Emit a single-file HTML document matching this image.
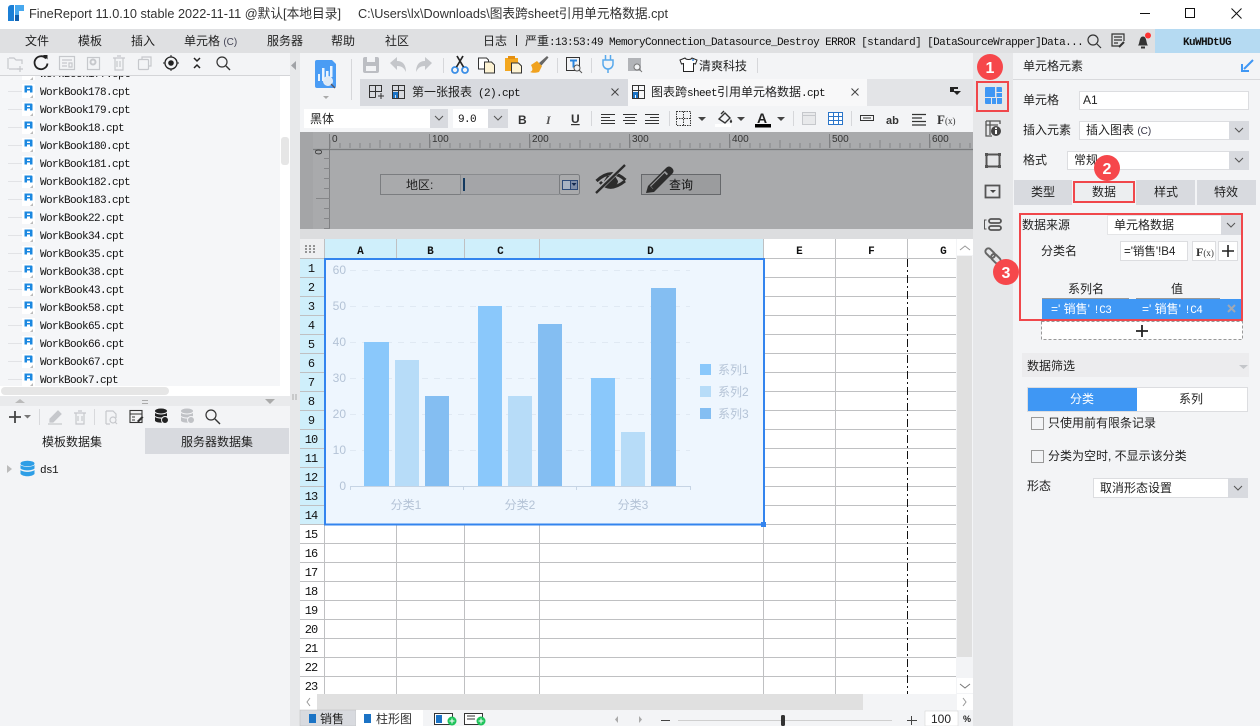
<!DOCTYPE html>
<html><head><meta charset="utf-8">
<style>
html,body{margin:0;padding:0;background:#f3f4f6;overflow:hidden}
svg{display:block}
text{white-space:pre}
.c{font:12px "Liberation Sans","Noto Sans CJK SC",sans-serif;fill:#222}
.t{font:13px "Liberation Sans","Noto Sans CJK SC",sans-serif;fill:#333}
.m{font:11px "Liberation Mono","Noto Sans CJK SC",monospace;letter-spacing:-.6px;fill:#111}
.s{font:12px "Liberation Mono",monospace;letter-spacing:-.9px;fill:#111}
.a{font:12px "Liberation Sans","Noto Sans CJK SC",sans-serif;fill:#b4c3d6}
.n{font:bold 16px "Liberation Sans",sans-serif;fill:#fff}
.mid{text-anchor:middle}
</style></head><body>
<svg xmlns="http://www.w3.org/2000/svg" width="1260" height="726" viewBox="0 0 1260 726">
<defs>
<pattern id="t10" width="10" height="5" patternUnits="userSpaceOnUse" x="329.5" y="143"><path d="M.5 0V5" stroke="#858688" fill="none"/></pattern>
<pattern id="t50" width="50" height="8" patternUnits="userSpaceOnUse" x="329.5" y="140"><path d="M.5 0V8" stroke="#858688" fill="none"/></pattern>
<pattern id="v10" width="6" height="10" patternUnits="userSpaceOnUse" x="324" y="149"><path d="M0 9.5H6" stroke="#858688" fill="none"/></pattern>
<g id="fi"><rect x="22" y="-7" width="13" height="14" fill="#fff"/><path d="M24.500-5.500h7a1 1 0 0 1 1 1v6h-2.500v-2h-3v2h-2.500z" fill="#1b88e0"/><rect x="27" y="-3.500" width="3" height="1.500" fill="#fff"/><path d="M30 7l3-3v3z" fill="#bbb"/><path d="M8 .5H22" stroke="#e2e3e6"/></g>
<g id="dd"><path d="M-4-2l4 4 4-4" fill="none" stroke="#555" stroke-width="1"/></g>
</defs>

<!-- backgrounds -->
<rect width="1260" height="726" fill="#f3f4f6"/>
<rect width="1260" height="29" fill="#fff"/>
<rect y="29" width="1260" height="24" fill="#dfe0e2"/>
<rect x="1155" y="29" width="105" height="24" fill="#b5daf2"/>

<!-- title bar -->
<path d="M8 8a3 3 0 0 1 3-3h3v16H8z" fill="#1b7fd6"/><path d="M15 5h9v6h-5v4h-4z" fill="#47a8ee"/><path d="M15 15h4v6h-4z" fill="#0f5fae"/>
<text class="t" x="29" y="18" textLength="312" lengthAdjust="spacingAndGlyphs">FineReport 11.0.10 stable 2022-11-11 @默认[本地目录]</text>
<text class="t" x="358" y="18" textLength="310" lengthAdjust="spacingAndGlyphs">C:\Users\lx\Downloads\图表跨sheet引用单元格数据.cpt</text>
<path d="M1140 13.500h10" stroke="#111"/><rect x="1185.500" y="8.500" width="9" height="9" fill="none" stroke="#111"/><path d="M1231.500 8.500l10 10m0-10l-10 10" stroke="#111" fill="none"/>

<!-- menu -->
<text class="c" x="25" y="45">文件</text><text class="c" x="78" y="45">模板</text><text class="c" x="131" y="45">插入</text>
<text class="c" x="184" y="45">单元格 <tspan style="font-size:10px;fill:#445">(C)</tspan></text><text class="c" x="267" y="45">服务器</text><text class="c" x="331" y="45">帮助</text><text class="c" x="385" y="45">社区</text>
<text class="c" x="483" y="45">日志</text><path d="M516.500 35v11" stroke="#222"/><text class="c" x="525" y="45">严重<tspan class="m">:13:53:49 MemoryConnection_Datasource_Destroy ERROR [standard] [DataSourceWrapper]Data...</tspan></text>
<g fill="none" stroke="#333" stroke-width="1.200"><circle cx="1093" cy="40" r="5"/><path d="M1097 44l4 4"/><path d="M1120 46h-8v-12h12v7"/><path d="M1114 37h8m-8 3h8m-8 3h4"/><path d="M1119 47l5-5" stroke-width="2"/></g>
<path d="M1138 45.500c2-2 1-9 5-9s3 7 5 9z" fill="#333"/><rect x="1141" y="46.500" width="4" height="2" fill="#333"/><circle cx="1148" cy="35.500" r="3" fill="#f33"/>
<text class="m" x="1183" y="45" style="font-weight:bold">KuWHDtUG</text>

<!-- left panel: file list -->
<rect x="0" y="76" width="280" height="310" fill="#f5f6f8"/>
<rect x="280" y="76" width="10" height="310" fill="#fff"/>
<rect x="281" y="137" width="8" height="28" rx="3" fill="#e6e6e6"/>
<use href="#fi" y="73"/><text class="m" x="40" y="77">WorkBook177.cpt</text>
<use href="#fi" y="91"/><text class="m" x="40" y="95">WorkBook178.cpt</text>
<use href="#fi" y="109"/><text class="m" x="40" y="113">WorkBook179.cpt</text>
<use href="#fi" y="127"/><text class="m" x="40" y="131">WorkBook18.cpt</text>
<use href="#fi" y="145"/><text class="m" x="40" y="149">WorkBook180.cpt</text>
<use href="#fi" y="163"/><text class="m" x="40" y="167">WorkBook181.cpt</text>
<use href="#fi" y="181"/><text class="m" x="40" y="185">WorkBook182.cpt</text>
<use href="#fi" y="199"/><text class="m" x="40" y="203">WorkBook183.cpt</text>
<use href="#fi" y="217"/><text class="m" x="40" y="221">WorkBook22.cpt</text>
<use href="#fi" y="235"/><text class="m" x="40" y="239">WorkBook34.cpt</text>
<use href="#fi" y="253"/><text class="m" x="40" y="257">WorkBook35.cpt</text>
<use href="#fi" y="271"/><text class="m" x="40" y="275">WorkBook38.cpt</text>
<use href="#fi" y="289"/><text class="m" x="40" y="293">WorkBook43.cpt</text>
<use href="#fi" y="307"/><text class="m" x="40" y="311">WorkBook58.cpt</text>
<use href="#fi" y="325"/><text class="m" x="40" y="329">WorkBook65.cpt</text>
<use href="#fi" y="343"/><text class="m" x="40" y="347">WorkBook66.cpt</text>
<use href="#fi" y="361"/><text class="m" x="40" y="365">WorkBook67.cpt</text>
<use href="#fi" y="379"/><text class="m" x="40" y="383">WorkBook7.cpt</text>

<!-- left toolbar -->
<rect x="0" y="53" width="290" height="22" fill="#f3f4f6"/>
<g fill="none" stroke="#c6c8cc" stroke-width="1.200">
<path d="M9 58h5l2 2h6v4m-14 5v-11M9 69h10"/><path d="M20 66v6m-3-3h6"/>
<rect x="59.500" y="56.500" width="15" height="13"/><path d="M62 60h10m-10 3h5m-5 3h5m2-3h3v4h-3z"/>
<rect x="87.500" y="57.500" width="12" height="12"/><circle cx="93" cy="62" r="2.500" stroke-width="2"/>
<path d="M113 58h12m-10 0v12h8v-12m-6-2h4m-4 5v6m3-6v6"/>
<rect x="138.500" y="59.500" width="10" height="10" rx="1"/><path d="M142 59v-2h9v9h-2"/>
</g>
<path d="M46 58.500a6.500 6.500 0 1 0 1.500 5" fill="none" stroke="#222" stroke-width="1.800"/><path d="M43 55l4.500 0 0 4.500z" fill="#222"/>
<circle cx="171" cy="63" r="6" fill="none" stroke="#222" stroke-width="1.300"/><circle cx="171" cy="63" r="2.800" fill="#222"/><path d="M171 55v2m0 12v2m-8-8h2m12 0h2" stroke="#222"/>
<path d="M194 58l3 3 3-3m-6 10l3-3 3 3" fill="none" stroke="#222" stroke-width="1.500"/>
<circle cx="222" cy="62" r="5" fill="none" stroke="#333" stroke-width="1.200"/><path d="M226 66l4 4" stroke="#333" stroke-width="1.400"/>
<path d="M0 75.500H290" stroke="#d4d5d8"/>

<rect x="0" y="386" width="290" height="10" fill="#fff"/>
<rect x="1" y="387" width="168" height="8" rx="4" fill="#e6e6e6"/>
<rect y="396" width="290" height="10" fill="#e9eaec"/>
<path d="M15 403l5-4 5 4z" fill="#bbb"/><path d="M265 399h10l-5 5z" fill="#aaa"/><path d="M142 400.500h6m-6 3h6" stroke="#aaa"/>
<path d="M9 417h12m-6-6v12" stroke="#444" stroke-width="1.800"/><path d="M24 415h7l-3.500 3.500z" fill="#777"/>
<path d="M39.500 409v16m55-16v16" stroke="#d8d9dc"/>
<g fill="none" stroke="#c6c8cc" stroke-width="1.200"><path d="M48 424h14"/><path d="M50 419l8-8 3 3-8 8-3 0z" fill="#c6c8cc"/><path d="M74 413h12m-10 0v11h8v-11m-6-2h4m-4 5v5m4-5v5"/><path d="M106 411h7l3 3v4m-10 6v-13m0 13h4"/><circle cx="113" cy="420" r="3"/><path d="M115 422l2 2"/></g>
<g fill="none" stroke="#333" stroke-width="1.100"><rect x="130" y="410.500" width="12" height="12"/><path d="M130 414h12m-10 3h3m-3 3h3"/></g><path d="M137 421l5-5 1.500 1.500-5 5z" fill="#333"/>
<g fill="#222"><ellipse cx="161" cy="411" rx="6" ry="2.500"/><path d="M155 413c3 2 9 2 12 0v3c-3 2-9 2-12 0zm0 4c3 2 8 2 10 1v4c-3 1-8 1-10-1z"/></g><circle cx="165" cy="420" r="3.500" fill="#222" stroke="#f3f4f6"/>
<g fill="#c0c2c6"><ellipse cx="187" cy="411" rx="6" ry="2.500"/><path d="M181 413c3 2 9 2 12 0v3c-3 2-9 2-12 0zm0 4c3 2 8 2 10 1v4c-3 1-8 1-10-1z"/></g><circle cx="191" cy="420" r="3.500" fill="#c0c2c6" stroke="#f3f4f6"/>
<circle cx="211" cy="415" r="5" fill="none" stroke="#333" stroke-width="1.200"/><path d="M215 419l5 5" stroke="#333" stroke-width="1.400"/>
<rect x="145" y="428" width="144" height="26" fill="#d8dadf"/>
<text class="c" x="72" y="446" text-anchor="middle">模板数据集</text><text class="c" x="217" y="446" text-anchor="middle">服务器数据集</text>
<path d="M7 465l5 4-5 4z" fill="#bbb"/>
<g fill="#2d9ee6"><ellipse cx="27.500" cy="463.500" rx="7" ry="2.800"/><path d="M20.500 465c3 2.500 11 2.500 14 0v3.500c-3 2.500-11 2.500-14 0zm0 5c3 2.500 11 2.500 14 0v4c-3 3-11 3-14 0z"/></g>
<text class="m" x="40" y="473">ds1</text>

<!-- splitter -->
<rect x="290" y="53" width="10" height="673" fill="#e7e8ea"/>
<path d="M296 61v9l-5-4.500z" fill="#a0a2a6"/><path d="M293 394v6m3-6v6" stroke="#aaa"/>

<!-- centre toolbar -->
<path d="M315 62a2 2 0 0 1 2-2h15l4 4v22a2 2 0 0 1-2 2h-17a2 2 0 0 1-2-2z" fill="#4a9cf4"/>
<rect x="318" y="74" width="2" height="7" fill="#e9f3fe"/><rect x="322" y="68" width="2.500" height="13" fill="#e9f3fe"/><rect x="326" y="71" width="2.500" height="6" fill="#e9f3fe"/><rect x="330" y="66" width="2.500" height="11" fill="#e9f3fe"/>
<circle cx="328" cy="81" r="4.500" fill="#dde9f5" stroke="#e8eef6"/><path d="M331 84l4 4" stroke="#556" stroke-width="1.300"/>
<path d="M323 96h6l-3 3z" fill="#aaa"/>
<path d="M351.500 59v41M443.500 58v15M557.500 58v15M591.500 58v15M757.500 58v15" stroke="#d6d7da"/>
<path d="M363 59a2 2 0 0 1 2-2h12a2 2 0 0 1 2 2v12a2 2 0 0 1-2 2h-12a2 2 0 0 1-2-2z" fill="#bcbec3"/><rect x="367" y="57" width="8" height="5" fill="#f3f4f6"/><rect x="366" y="66" width="10" height="5" fill="#f3f4f6"/>
<path d="M390 63l7-6v4c6 0 9 4 9 11-2-4-4-6-9-6v4z" fill="#c4c6ca"/><path d="M432 63l-7-6v4c-6 0-9 4-9 11 2-4 4-6 9-6v4z" fill="#c4c6ca"/>
<g fill="none" stroke="#3a8ee6" stroke-width="1.800"><circle cx="455" cy="70" r="3"/><circle cx="465" cy="70" r="3"/></g><path d="M456.500 67L463 56M463.500 67L457 56" stroke="#222" stroke-width="1.700"/>
<path d="M478.500 58h8l2 2v9h-10z" fill="#fff" stroke="#333"/><path d="M484.500 62h7l3 3v8h-10z" fill="#fdf3d4" stroke="#333"/>
<rect x="505" y="58" width="13" height="13" fill="#f3a71f"/><rect x="508" y="56" width="7" height="3" fill="#e58f10"/><path d="M511.500 63h7l3 3v7h-10z" fill="#fdf3d4" stroke="#333"/>
<path d="M531 65l6-4 5 5-3 6c-4 1-6 1-9 0 3-1 3-3 1-7z" fill="#f0a21f"/><path d="M539 63l8-7 1.500 1.500-7 8z" fill="#666"/>
<rect x="566.500" y="57.500" width="13" height="13" fill="none" stroke="#333"/><path d="M570 60.500h7m-3.500 0v7" stroke="#2a86e0" stroke-width="2"/><circle cx="577" cy="68" r="3" fill="#f3f4f6" stroke="#555"/><path d="M579 70l3 3" stroke="#555"/>
<path d="M603 60h10v4a5 5 0 0 1-10 0zM605.500 55v5m5-5v5M608 69v4" fill="none" stroke="#59a9ec" stroke-width="1.500"/>
<rect x="628" y="58" width="13" height="13" fill="#b2b4b8"/><circle cx="637" cy="67" r="3" fill="#f3f4f6" stroke="#777"/><path d="M639 69l3 3" stroke="#777"/>
<path d="M685 58l-5 2 1.500 4 2-.5v8h10v-8l2 .5 1.500-4-5-2c-1 2-6 2-7 0z" fill="#fff" stroke="#222"/><circle cx="693" cy="60" r="1" fill="#3a8ee6"/>
<text class="c" x="699" y="70">清爽科技</text>

<!-- tab row -->
<rect x="360" y="79" width="613" height="27" fill="#e3e4e7"/>
<rect x="360" y="79" width="268" height="27" fill="#d8dadf"/>
<rect x="628" y="79" width="239" height="27" fill="#f8f8f9"/>
<g fill="none" stroke="#333"><path d="M369.500 85.500h12v6h-12zM369.500 91.500v6h6M375.500 85.500v12"/><path d="M381 93v6m-3-3h6"/>
<path d="M392.500 85.500h12v13h-12zM392.500 90.500h12M398.500 85.500v13"/>
<path d="M632.500 85.500h12v13h-12zM632.500 90.500h12M638.500 85.500v13"/></g>
<path d="M393 92h5v6h-2v-3h-1v3h-2z" fill="#1b73c5"/><path d="M633 92h5v6h-2v-3h-1v3h-2z" fill="#1b73c5"/>
<text class="c" x="412" y="96">第一张报表<tspan class="m"> (2).cpt</tspan></text>
<text class="c" x="651" y="96">图表跨<tspan class="m">sheet</tspan>引用单元格数据<tspan class="m">.cpt</tspan></text>
<path d="M611.500 88.500l7 7m0-7l-7 7M851.500 88.500l7 7m0-7l-7 7" stroke="#444" fill="none"/>
<path d="M950 87h8v2h-4v3h-4z" fill="#222"/><path d="M953 91h8l-4 4z" fill="#222"/>

<!-- format row -->
<rect x="304" y="109" width="126" height="19" fill="#fff"/><rect x="430" y="109" width="18" height="19" fill="#d8dadf"/>
<use href="#dd" x="439" y="118"/><text class="c" x="310" y="123">黑体</text>
<rect x="453" y="109" width="35" height="19" fill="#fff"/><rect x="488" y="109" width="20" height="19" fill="#d8dadf"/>
<use href="#dd" x="498" y="118"/><text class="m" x="458" y="122">9.0</text>
<text x="518" y="124" style="font:bold 12px 'Liberation Sans';fill:#333">B</text><text x="546" y="124" style="font:italic bold 12px 'Liberation Serif';fill:#555">I</text><text x="571" y="123" style="font:bold 12px 'Liberation Sans';fill:#333;text-decoration:underline">U</text>
<path d="M591.500 111v15M669.500 111v15M793.500 111v15M851.500 111v15" stroke="#d6d7da"/>
<path d="M601 114.500h14M601 117.500h9M601 120.500h14M601 123.500h14M623 114.500h14M625 117.500h10M623 120.500h14M625 123.500h10M645 114.500h14M650 117.500h9M645 120.500h14M645 123.500h14" stroke="#333"/>
<path d="M676.500 111.500h14v14h-14zM683.500 111.500v14M676.500 118.500h14" fill="none" stroke="#333" stroke-dasharray="1.500 1"/>
<path d="M698 117h8l-4 4zM737 117h8l-4 4zM777 117h8l-4 4z" fill="#444"/>
<path d="M719 119l6-6 5 5-5 5zM724 111l-3 3" fill="none" stroke="#333" stroke-width="1.400"/><path d="M731 119c1 2 2 3 0 4-2-1-1-2 0-4z" fill="#333"/><rect x="715" y="124" width="16" height="3" fill="#fff"/>
<text x="757" y="123" style="font:bold 14px 'Liberation Sans';fill:#222">A</text><rect x="755" y="124" width="16" height="3.500" fill="#000"/>
<rect x="802.500" y="112.500" width="13" height="12" fill="#e8e9eb" stroke="#c6c8cc"/><path d="M802 115.500h14" stroke="#c6c8cc"/>
<path d="M828.500 112.500h14v12h-14zM828.500 116.500h14M828.500 120.500h14M833.500 112.500v12M838.500 112.500v12" fill="#fff" stroke="#2a75c9"/>
<rect x="860.500" y="115.500" width="13" height="5" fill="none" stroke="#333"/><path d="M863 118h8" stroke="#333"/>
<text x="886" y="124" style="font:bold 11px 'Liberation Sans';fill:#333">ab</text>
<path d="M912 114.500h14M912 118h10M912 121.500h14M912 125h14" stroke="#333" stroke-width="1.300"/>
<text x="937" y="124" style="font:bold 13px 'Liberation Serif';fill:#333">F<tspan style="font-size:9px;font-weight:normal">(x)</tspan></text>

<!-- ruler and parameter pane -->
<rect x="300" y="132" width="673" height="97" fill="#a9aaac"/>
<rect x="300" y="132" width="13" height="97" fill="#a4a5a7"/>
<rect x="300" y="229" width="673" height="10" fill="#dcdddf"/>
<rect x="330" y="143" width="643" height="5" fill="url(#t10)"/>
<rect x="330" y="140" width="643" height="8" fill="url(#t50)"/>
<path d="M329.500 134v95M429.500 134v14M529.500 134v14M629.500 134v14M729.500 134v14M829.500 134v14M929.500 134v14" stroke="#7f8082"/>
<path d="M313 149.500H973" stroke="#7a7b7d" stroke-width="1.300"/>
<rect x="324" y="149" width="6" height="80" fill="url(#v10)"/>
<path d="M316 198.500h14" stroke="#858688"/>
<g style="font:10px 'Liberation Sans';fill:#333"><text x="332" y="142">0</text><text x="432" y="142">100</text><text x="532" y="142">200</text><text x="632" y="142">300</text><text x="732" y="142">400</text><text x="832" y="142">500</text><text x="932" y="142">600</text></g>
<text transform="translate(322 152) rotate(-90)" style="font:10px 'Liberation Sans';fill:#333" text-anchor="middle">0</text>
<rect x="380.500" y="174.500" width="80" height="20" fill="#a9aaac" stroke="#7b7d80"/>
<text class="c" x="406" y="189">地区:</text>
<rect x="460.500" y="174.500" width="99" height="20" rx="1" fill="#a4a5a8" stroke="#8a8c8f"/>
<rect x="463" y="178" width="2" height="13" fill="#13395f"/>
<rect x="559.500" y="174.500" width="20" height="20" rx="2" fill="#a9aaac" stroke="#7b7d80"/>
<rect x="562.500" y="180.500" width="15" height="9" fill="#7f8ea8" stroke="#2d4a78"/><rect x="563" y="181" width="7" height="8" fill="#a9b3c2"/><path d="M570.500 181v8" stroke="#2d4a78"/><path d="M571.500 183h5l-2.500 3z" fill="#13294f"/>
<path d="M596.500 181Q611 167 625.500 180" fill="none" stroke="#2c2c2c" stroke-width="3"/><path d="M600 182Q610 193 625 181" fill="none" stroke="#2c2c2c" stroke-width="3"/><path d="M604 181a7 6 0 0 0 14 0l-3-5h-8z" fill="#2c2c2c"/>
<path d="M595.500 193L624 165" stroke="#a9aaac" stroke-width="4.500"/><path d="M596 193L625 165" stroke="#2c2c2c" stroke-width="2.300"/>
<rect x="641.500" y="174.500" width="79" height="20" fill="#9b9c9e" stroke="#66686b"/>
<path d="M646 193l2-7 18-18c2-2 4-2 6 0s2 4 0 6l-18 18z" fill="#2c2c2c"/><path d="M650 186l3 3 15-15-3-3z" fill="#9b9c9e"/><path d="M651 186.500l2.500 2.500 13.500-13.500-2.500-2.500z" fill="#2c2c2c"/>
<text class="c" x="669" y="189" style="fill:#111">查询</text>

<!-- grid -->
<rect x="300" y="239" width="657" height="456" fill="#fff"/>
<rect x="300" y="239" width="24" height="19" fill="#eeeff1"/>
<path d="M305 246h2m2 0h2m2 0h2M305 249h2m2 0h2m2 0h2M305 252h2m2 0h2m2 0h2" stroke="#777" stroke-width="1.500" fill="none"/>
<rect x="325" y="239" width="439" height="19" fill="#cfeffb"/>
<rect x="300" y="259" width="24" height="266" fill="#cfeffb"/>
<path d="M300 277.500H957M300 296.500H957M300 315.500H957M300 334.500H957M300 353.500H957M300 372.500H957M300 391.500H957M300 410.500H957M300 429.500H957M300 448.500H957M300 467.500H957M300 486.500H957M300 505.500H957M300 524.500H957M300 543.500H957M300 562.500H957M300 581.500H957M300 600.500H957M300 619.500H957M300 638.500H957M300 657.500H957M300 676.500H957M300 258.500H957" stroke="#bfc0c2" fill="none"/>
<path d="M324.500 239V695M396.500 239V695M464.500 239V695M539.500 239V695M763.500 239V695M835.500 239V695M907.500 239V259" stroke="#bfc0c2" fill="none"/>
<path d="M907.500 259V695" stroke="#111" stroke-dasharray="8 3 2 3" fill="none"/>
<g class="s" style="font-size:11px;font-weight:bold" text-anchor="middle"><text x="360" y="254">A</text><text x="430" y="254">B</text><text x="500" y="254">C</text><text x="650" y="254">D</text><text x="799" y="254">E</text><text x="871" y="254">F</text><text x="943" y="254">G</text></g>
<g class="s" text-anchor="middle">
<text x="311" y="272">1</text><text x="311" y="291">2</text><text x="311" y="310">3</text><text x="311" y="329">4</text><text x="311" y="348">5</text><text x="311" y="367">6</text><text x="311" y="386">7</text><text x="311" y="405">8</text><text x="311" y="424">9</text><text x="311" y="443">10</text><text x="311" y="462">11</text><text x="311" y="481">12</text><text x="311" y="500">13</text><text x="311" y="519">14</text><text x="311" y="538">15</text><text x="311" y="557">16</text><text x="311" y="576">17</text><text x="311" y="595">18</text><text x="311" y="614">19</text><text x="311" y="633">20</text><text x="311" y="652">21</text><text x="311" y="671">22</text><text x="311" y="690">23</text></g>

<!-- chart -->
<rect x="326" y="260" width="437" height="264" fill="#eef6fe"/>
<path d="M350 270.500H690M350 306.500H690M350 342.500H690M350 378.500H690M350 414.500H690M350 450.500H690" stroke="#e0e9f3" stroke-dasharray="6 6" fill="none"/>
<path d="M350.500 490v-3.500H690.500v3.500M463.500 486v4M576.500 486v4" stroke="#c6d4e4" fill="none"/>
<g fill="#8ac8fb"><rect x="364" y="342" width="25" height="144"/><rect x="478" y="306" width="24" height="180"/><rect x="591" y="378" width="24" height="108"/></g>
<g fill="#b7dcf8"><rect x="395" y="360" width="24" height="126"/><rect x="508" y="396" width="24" height="90"/><rect x="621" y="432" width="24" height="54"/></g>
<g fill="#84bef2"><rect x="425" y="396" width="24" height="90"/><rect x="538" y="324" width="24" height="162"/><rect x="651" y="288" width="25" height="198"/></g>
<g class="a" text-anchor="end"><text x="346" y="274">60</text><text x="346" y="310">50</text><text x="346" y="346">40</text><text x="346" y="382">30</text><text x="346" y="418">20</text><text x="346" y="454">10</text><text x="346" y="490">0</text></g>
<g class="a" text-anchor="middle"><text x="406" y="509">分类1</text><text x="520" y="509">分类2</text><text x="633" y="509">分类3</text></g>
<rect x="700" y="364" width="11" height="11" fill="#8ac8fb"/><rect x="700" y="386" width="11" height="11" fill="#b7dcf8"/><rect x="700" y="408" width="11" height="11" fill="#84bef2"/>
<text class="a" x="718" y="374">系列1</text><text class="a" x="718" y="396">系列2</text><text class="a" x="718" y="418">系列3</text>
<rect x="325" y="259" width="439" height="265.500" fill="none" stroke="#3384ee" stroke-width="2"/>
<rect x="761" y="522" width="5" height="5" fill="#3384ee"/>

<!-- scrollbars / bottom -->
<rect x="956" y="239" width="17" height="471" fill="#f3f4f6"/>
<rect x="957" y="239" width="16" height="16" fill="#fff"/><path d="M960 250l5-4 5 4" fill="none" stroke="#999"/>
<rect x="957" y="256" width="15" height="401" fill="#e0e0e0"/>
<rect x="957" y="678" width="16" height="15" fill="#fff"/><path d="M960 684l5 4 5-4" fill="none" stroke="#777"/>
<rect x="300" y="694" width="673" height="16" fill="#f3f4f6"/>
<rect x="300" y="694" width="17" height="16" fill="#fff"/>
<rect x="957" y="694" width="16" height="16" fill="#fff"/>
<rect x="317" y="694" width="546" height="16" fill="#e0e0e0"/>
<path d="M310 698l-3 4 3 4M963 698l3 4-3 4" fill="none" stroke="#999"/>
<rect x="300" y="710" width="56" height="16" fill="#d8dadf" stroke="#bbb" stroke-width=".5"/>
<rect x="356" y="710" width="67" height="16" fill="#fff"/>
<rect x="423" y="710" width="550" height="16" fill="#f3f4f6"/>
<rect x="309" y="714" width="7" height="9" fill="#1b73c5"/><rect x="364" y="714" width="7" height="9" fill="#1b73c5"/>
<text class="c" x="320" y="723">销售</text><text class="c" x="376" y="723" style="fill:#333">柱形图</text>
<rect x="434.500" y="713.500" width="18" height="11" fill="#fff" stroke="#333"/><rect x="436" y="715" width="6" height="8" fill="#1b73c5"/><circle cx="452" cy="721" r="4.500" fill="#1fc35b"/><path d="M449.500 721h5m-2.500-2.500v5" stroke="#fff"/>
<rect x="464.500" y="713.500" width="18" height="11" fill="#fff" stroke="#333"/><path d="M467 716h8m-8 3h8" stroke="#333"/><circle cx="481" cy="721" r="4.500" fill="#1fc35b"/><path d="M478.500 721h5m-2.500-2.500v5" stroke="#fff"/>
<path d="M618 716v7l-3-3.500zM639 716v7l3-3.500z" fill="#aaa"/>
<path d="M661 720.500h9M907 720.500h10M911.500 716v9" stroke="#444"/>
<path d="M678 720.500H892" stroke="#cfcfcf"/><rect x="781" y="715" width="4" height="11" rx="1.500" fill="#333"/>
<rect x="925" y="711" width="33" height="15" fill="#fff" stroke="#d0d0d0" stroke-width=".5"/>
<text class="c" x="941" y="723" text-anchor="middle">100</text><text x="963" y="722" style="font:bold 9px 'Liberation Sans';fill:#222">%</text>

<!-- icon column -->
<rect x="973" y="53" width="40" height="673" fill="#e6e7e9"/>
<path d="M985 88a1 1 0 0 1 1-1h9v10h-10zM996.500 87h4.500a1 1 0 0 1 1 1v4h-5.500zM996.500 93h5.500v4h-5.500zM985 98h6v6h-5a1 1 0 0 1-1-1zM992 98h4v6h-4zM997 98h5v5a1 1 0 0 1-1 1h-4z" fill="#3f97f4"/>
<g stroke="#555" fill="none" stroke-width="1.300"><path d="M986 121h14v3M986 121v15h6M986 125h12M990 121v14"/></g><circle cx="996" cy="131" r="5" fill="#444"/><rect x="995" y="130" width="2" height="4" fill="#fff"/><rect x="995" y="127.500" width="2" height="1.500" fill="#fff"/>
<rect x="986.500" y="154.500" width="13" height="12" fill="none" stroke="#555" stroke-width="2"/><rect x="985" y="153" width="3" height="3" fill="#555"/><rect x="998" y="153" width="3" height="3" fill="#555"/><rect x="985" y="165" width="3" height="3" fill="#555"/><rect x="998" y="165" width="3" height="3" fill="#555"/>
<rect x="985.500" y="185.500" width="14" height="12" fill="none" stroke="#555" stroke-width="1.800"/><path d="M990 190h6l-3 3z" fill="#444"/>
<rect x="989" y="219" width="12" height="4" rx="2" fill="none" stroke="#555" stroke-width="1.800"/><rect x="989" y="226" width="12" height="4" rx="2" fill="none" stroke="#555" stroke-width="1.800"/><path d="M986.500 220h-2v9h2" fill="none" stroke="#555"/>
<g transform="rotate(45 993 256)" fill="none" stroke="#666" stroke-width="2"><rect x="983.500" y="253" width="11" height="6" rx="3"/><rect x="991.500" y="253" width="11" height="6" rx="3"/></g>
<rect x="977" y="82" width="31" height="29" fill="none" stroke="#f0474b" stroke-width="2"/>
<circle cx="990" cy="67" r="13" fill="#f6474b"/><text class="n mid" x="990" y="73">1</text>

<!-- right panel -->
<text class="c" x="1023" y="70">单元格元素</text>
<path d="M1253 60l-9 9M1242 64v7h7" stroke="#3f97f4" stroke-width="2" fill="none"/>
<path d="M1013 79.500H1260" stroke="#d8d9dc"/>
<text class="c" x="1023" y="104">单元格</text><rect x="1079.500" y="91.500" width="169" height="18" fill="#fff" stroke="#dcdde0"/><text class="c" x="1083" y="104">A1</text>
<text class="c" x="1023" y="134">插入元素</text><rect x="1079.500" y="121.500" width="169" height="18" fill="#fff" stroke="#dcdde0"/><rect x="1229" y="121" width="20" height="19" fill="#d8dadf"/><use href="#dd" x="1239" y="130"/>
<text class="c" x="1086" y="134">插入图表 <tspan style="font-size:10px;fill:#334">(C)</tspan></text>
<text class="c" x="1023" y="164">格式</text><rect x="1067.500" y="151.500" width="181" height="18" fill="#fff" stroke="#dcdde0"/><rect x="1229" y="151" width="20" height="19" fill="#d8dadf"/><use href="#dd" x="1239" y="160"/>
<text class="c" x="1074" y="164">常规</text>
<rect x="1014" y="180" width="58" height="25" fill="#d8dadf"/><rect x="1136" y="180" width="59" height="25" fill="#d8dadf"/><rect x="1197" y="180" width="59" height="25" fill="#d8dadf"/>
<rect x="1074" y="182" width="60" height="20" fill="#eceef0" stroke="#f0474b" stroke-width="2"/>
<text class="c" x="1043" y="196" text-anchor="middle">类型</text><text class="c" x="1104" y="196" text-anchor="middle">数据</text><text class="c" x="1166" y="196" text-anchor="middle">样式</text><text class="c" x="1226" y="196" text-anchor="middle">特效</text>
<circle cx="1107" cy="168" r="13" fill="#f6474b"/><text class="n mid" x="1107" y="174">2</text>

<rect x="1107.500" y="215.500" width="133" height="19" fill="#fff" stroke="#e4e5e7"/><rect x="1221" y="215" width="20" height="20" fill="#d8dadf"/><use href="#dd" x="1231" y="225"/>
<text class="c" x="1022" y="229">数据来源</text><text class="c" x="1114" y="229">单元格数据</text>
<text class="c" x="1041" y="255">分类名</text>
<rect x="1120.500" y="241.500" width="67" height="19" fill="#fff" stroke="#dcdde0"/><text class="c" x="1124" y="255" style="font-size:11.500px">='销售'!B4</text>
<rect x="1192.500" y="241.500" width="23" height="19" fill="#fff" stroke="#dcdde0"/><text x="1196" y="256" style="font:bold 12px 'Liberation Serif';fill:#333">F<tspan style="font-size:9px;font-weight:normal">(x)</tspan></text>
<rect x="1218.500" y="241.500" width="19" height="19" fill="#fff" stroke="#dcdde0"/><path d="M1222 251h12m-6-6v12" stroke="#222" stroke-width="1.600"/>
<text class="c" x="1086" y="293" text-anchor="middle">系列名</text><text class="c" x="1177" y="293" text-anchor="middle">值</text>
<path d="M1042 298.500h87M1136 298.500h84" stroke="#999"/>
<rect x="1042" y="299" width="200" height="20" fill="#3f97f4"/>
<text class="c" x="1051" y="313" style="fill:#fff">=' 销售' <tspan class="m" style="fill:#fff">!C3</tspan></text><text class="c" x="1142" y="313" style="fill:#fff">=' 销售' <tspan class="m" style="fill:#fff">!C4</tspan></text>
<path d="M1228 305l7 7m0-7l-7 7" stroke="#a0a8b4" stroke-width="2"/>
<rect x="1020" y="214" width="222" height="106" fill="none" stroke="#f0474b" stroke-width="2"/>
<rect x="1041.500" y="321.500" width="201" height="18" fill="#fff" stroke="#999" stroke-dasharray="3 2"/><path d="M1136 331h12m-6-6v12" stroke="#222" stroke-width="1.800"/>
<circle cx="1006" cy="272" r="13" fill="#f6474b"/><text class="n mid" x="1006" y="278">3</text>

<rect x="1022" y="353" width="227" height="24" fill="#ececee"/><text class="c" x="1027" y="370">数据筛选</text><path d="M1239 365h9l-4.500 4z" fill="#c4c6ca"/>
<rect x="1027.500" y="387.500" width="220" height="24" fill="#fff" stroke="#dcdde0"/><rect x="1028" y="388" width="109" height="23" fill="#3f97f4"/>
<text class="c" x="1082" y="403" text-anchor="middle" style="fill:#fff">分类</text><text class="c" x="1191" y="403" text-anchor="middle">系列</text>
<rect x="1031.500" y="417.500" width="12" height="12" fill="none" stroke="#999"/><text class="c" x="1048" y="427">只使用前有限条记录</text>
<rect x="1031.500" y="450.500" width="12" height="12" fill="none" stroke="#999"/><text class="c" x="1048" y="460">分类为空时, 不显示该分类</text>
<text class="c" x="1027" y="490">形态</text><rect x="1093.500" y="478.500" width="154" height="19" fill="#fff" stroke="#dcdde0"/><rect x="1228" y="478" width="20" height="20" fill="#d8dadf"/><use href="#dd" x="1238" y="488"/>
<text class="c" x="1100" y="492">取消形态设置</text>
</svg>
</body></html>
